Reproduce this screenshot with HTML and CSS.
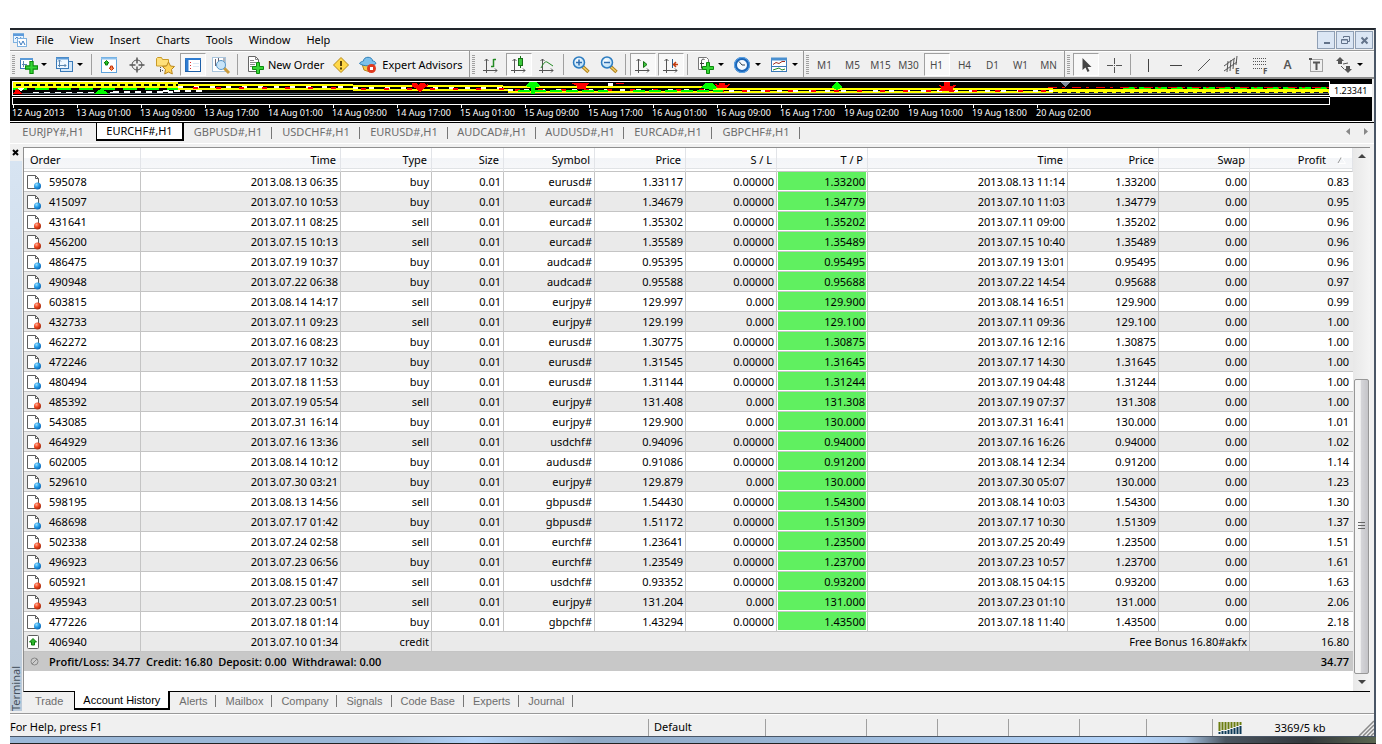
FILE: index.html
```html
<!DOCTYPE html>
<html lang="en">
<head>
<meta charset="utf-8">
<title>Terminal - Account History</title>
<link rel="stylesheet" href="styles.css">
</head>
<body>
<svg class="defs" aria-hidden="true">
  <defs>
    <radialGradient id="gb" cx=".35" cy=".3" r=".7"><stop offset="0" stop-color="#9be0ff"/><stop offset=".5" stop-color="#2a9fe8"/><stop offset="1" stop-color="#0a68b8"/></radialGradient>
    <radialGradient id="gr" cx=".35" cy=".3" r=".7"><stop offset="0" stop-color="#ffb09a"/><stop offset=".5" stop-color="#ee4a20"/><stop offset="1" stop-color="#a82808"/></radialGradient>
    <radialGradient id="lens" cx=".4" cy=".35" r=".7"><stop offset="0" stop-color="#fff"/><stop offset="1" stop-color="#a9d8f5"/></radialGradient>
    <g id="page"><path d="M.5 1.500h8l3 3v10h-11z" fill="#fff" stroke="#5d5d5d"/><path d="M8.500 1.500v3h3" fill="none" stroke="#5d5d5d"/></g>
    <symbol id="buy" viewBox="0 0 15 16"><use href="#page"/><circle cx="10.500" cy="12" r="3.500" fill="url(#gb)"/></symbol>
    <symbol id="sell" viewBox="0 0 15 16"><use href="#page"/><circle cx="10.500" cy="12" r="3.500" fill="url(#gr)"/></symbol>
    <symbol id="credit" viewBox="0 0 15 16"><rect x=".5" y="1.500" width="11" height="13" rx="1" fill="#fff" stroke="#5d5d5d"/><path d="M6 4.500l3.500 3.500h-2v3h-3v-3h-2z" fill="#2eb82e" stroke="#0a7a0a"/></symbol>
    <symbol id="plus" viewBox="0 0 12 12"><path d="M4.500 .5h3v4h4v3h-4v4h-3v-4h-4v-3h4z" fill="#35d535" stroke="#0b8a0b"/></symbol>
    <symbol id="axes" viewBox="0 0 20 20"><path d="M5.500 4v14M2 15.500h14M3.500 6l2-2 2 2M14 13.500l2 2-2 2" fill="none" stroke="#555"/></symbol>
    <symbol id="zoomer" viewBox="0 0 20 20"><path d="M11 11l6.500 6" stroke="#b08018" stroke-width="3.500"/><path d="M12 12l5 4.500" stroke="#f3cf68" stroke-width="1.500"/><circle cx="8" cy="7.500" r="5.500" fill="url(#lens)" stroke="#2d7cc0" stroke-width="1.500"/></symbol>
  </defs>
</svg>

<div class="window">
  <header class="menubar">
    <svg class="app-icon" width="16" height="16" viewBox="0 0 16 16"><rect x="1.500" y="1.500" width="10" height="9" fill="#e8f4ff" stroke="#7fb2e0"/><path d="M1 3h11" stroke="#5c9ada" stroke-width="2"/><path d="M3 7l2-2 2 3 2-3" fill="none" stroke="#4c88c8"/><rect x="5.500" y="6.500" width="9" height="8" fill="#fff" stroke="#7fb2e0"/><path d="M7 9l2 4 2-4 2 4" fill="none" stroke="#3d7cc0"/></svg>
    <nav class="menu">
      <button>File</button><button>View</button><button>Insert</button><button>Charts</button><button>Tools</button><button>Window</button><button>Help</button>
    </nav>
    <div class="winbtns">
      <button aria-label="Minimize"><svg width="15" height="15"><path d="M5 10h6" stroke="#63738a" stroke-width="2"/></svg></button>
      <button aria-label="Restore"><svg width="15" height="15"><path d="M5.500 5v-1.500h6v5h-2M3.500 6.500h6v4h-6zM3.500 7h6" fill="none" stroke="#63738a"/></svg></button>
      <button aria-label="Close"><svg width="15" height="15"><path d="M4.500 4.500l6 6M10.500 4.500l-6 6" stroke="#63738a" stroke-width="2"/></svg></button>
    </div>
  </header>

  <div class="toolbar">
    <div class="group main">
      <i class="grip"></i>
      <button class="drop" aria-label="New chart"><svg width="20" height="20"><rect x="2.500" y="3.500" width="12" height="10" fill="#fff" stroke="#3a7ab8"/><path d="M2 4h13" stroke="#5b9bd8" stroke-width="2"/><path d="M5.500 6v6M4 9.500h5" stroke="#5b87b0"/><use href="#plus" x="7" y="6" width="13" height="13"/></svg><i class="caret"></i></button>
      <button class="drop" aria-label="Profiles"><svg width="20" height="20"><rect x="6.500" y="6.500" width="12" height="10" fill="#d4e8fa" stroke="#3a7ab8"/><rect x="2.500" y="2.500" width="12" height="11" fill="#eef7ff" stroke="#3a7ab8"/><path d="M2 3.500h13" stroke="#5b9bd8" stroke-width="2"/><path d="M5.500 5v7M4 10.500h8M4 6.500l1.500-1.500 1.500 1.500M10.500 9l1.500 1.500-1.500 1.500" fill="none" stroke="#5b87b0"/></svg><i class="caret"></i></button>
      <i class="sep"></i>
      <button class="tool" aria-label="Market Watch"><svg width="20" height="20"><rect x="2.500" y="2.500" width="15" height="15" fill="#fff" stroke="#5fa3dc"/><path d="M2 3.500h16" stroke="#8cc0ec" stroke-width="2"/><path d="M7.500 5.500l2.500 2.500h-1.500v2h-2v-2h-1.500z" fill="#2bc52b" stroke="#0b7d0b"/><path d="M12.500 15.500l-2.500-2.500h1.500v-2h2v2h1.500z" fill="#ff8a50" stroke="#c63a10"/></svg></button>
      <button class="tool" aria-label="Data Window"><svg width="20" height="20"><circle cx="10" cy="10" r="5" fill="none" stroke="#555"/><path d="M10 2.500v6M10 11.500v6M2.500 10h6M11.500 10h6" stroke="#555" stroke-width="1.500"/></svg></button>
      <button class="tool" aria-label="Navigator"><svg width="20" height="20"><path d="M1.500 11V3.500l1-1h4l1 2h6v6.500z" fill="#ffe07a" stroke="#c89a28"/><path d="M5.500 12v6M5 15.500h4" stroke="#555" stroke-dasharray="1 1"/><path d="M13.500 7l2 4 4 .5-3 3 .8 4.500-3.800-2-3.800 2 .8-4.500-3-3 4-.5z" fill="#ffd45a" stroke="#b8861c"/></svg></button>
      <button class="tool on" aria-label="Terminal"><svg width="20" height="20"><rect x="2.500" y="3.500" width="15" height="13" fill="#fff" stroke="#1d5fa8"/><path d="M2 4h16" stroke="#2f7cd0" stroke-width="2"/><path d="M4 5v11" stroke="#2f7cd0" stroke-width="3"/><path d="M7.500 7v8" stroke="#d33" stroke-dasharray="1 2"/><path d="M10 8.500h6M10 11.500h6" stroke="#dce8f4"/></svg></button>
      <button class="tool" aria-label="Strategy Tester"><svg width="20" height="20"><rect x="1.500" y="2.500" width="13" height="14" fill="#fff" stroke="#a8c4dc"/><path d="M4.500 4v7M7.500 3v7M10.500 5v6M13 3v7" stroke="#667"/><path d="M13 13l5 5" stroke="#c89a3c" stroke-width="3"/><circle cx="10" cy="10" r="4.500" fill="#c8e4f8" stroke="#5a98c8"/></svg></button>
      <i class="sep"></i>
      <button class="wide"><svg width="20" height="20"><path d="M4.500 1.500h7l3 3v12h-10z" fill="#fff" stroke="#666"/><path d="M11.500 1.500v3h3M6 5.500h4M6 7.500h6M6 9.500h5M6 11.500h4" fill="none" stroke="#888"/><use href="#plus" x="8" y="7" width="12" height="12"/></svg>New Order</button>
      <button class="tool" aria-label="MetaEditor"><svg width="20" height="20"><path d="M10 2.500l7.500 7.500-7.500 7.500-7.500-7.500z" fill="#ffd84a" stroke="#b88a14" stroke-linejoin="round"/><path d="M10 6v5M10 12.500v2" stroke="#5a4208" stroke-width="2"/></svg></button>
      <button class="wide"><svg width="20" height="20"><path d="M4 9l2 6 6 2 4-8z" fill="#f5c84c" stroke="#b8861c"/><path d="M1.500 8.500c1-2 3-2 4-2.500 0-5 9-5 9 0 2 0 3 1 3.500 2.500-4 3-13 3-16.500 0z" fill="#7cc0ec" stroke="#2d7fb8"/><circle cx="13.500" cy="13.500" r="4.500" fill="#e03a20"/><rect x="12" y="12" width="3" height="3" fill="#fff"/></svg>Expert Advisors</button>
    </div>
    <div class="group">
      <i class="grip"></i>
      <button class="tool" aria-label="Bar Chart"><svg width="20" height="20"><use href="#axes" width="20" height="20"/><path d="M12.500 4v8M12.500 4.500h2.500M10 11.500h2.500" stroke="#238a23" stroke-width="1.500"/></svg></button>
      <button class="tool on" aria-label="Candlesticks"><svg width="20" height="20"><use href="#axes" width="20" height="20"/><path d="M11.500 1v12" stroke="#167016"/><rect x="9.500" y="3.500" width="4" height="7" fill="#3cc83c" stroke="#167016"/></svg></button>
      <button class="tool" aria-label="Line Chart"><svg width="20" height="20"><use href="#axes" width="20" height="20"/><path d="M4 13c2-4 4-7 6-6s4 3 6 4" fill="none" stroke="#238a23"/></svg></button>
      <i class="sep"></i>
      <button class="tool" aria-label="Zoom In"><svg width="20" height="20"><use href="#zoomer" width="20" height="20"/><path d="M5 7.500h6M8 4.500v6" stroke="#2d6cb0" stroke-width="1.500"/></svg></button>
      <button class="tool" aria-label="Zoom Out"><svg width="20" height="20"><use href="#zoomer" width="20" height="20"/><path d="M5 7.500h6" stroke="#2d6cb0" stroke-width="1.500"/></svg></button>
      <i class="sep"></i>
      <button class="tool on" aria-label="Auto Scroll"><svg width="20" height="20"><use href="#axes" width="20" height="20"/><path d="M10.500 6.500v6l3.500-3z" fill="#3cc83c" stroke="#167016"/></svg></button>
      <button class="tool on" aria-label="Chart Shift"><svg width="20" height="20"><use href="#axes" width="20" height="20"/><path d="M11.500 4v9" stroke="#2d5f8c"/><path d="M17 9.500h-4M15 7l-2.500 2.500 2.500 2.500" fill="none" stroke="#c43c10" stroke-width="1.500"/></svg></button>
      <i class="sep"></i>
      <button class="drop" aria-label="Indicators"><svg width="20" height="20"><path d="M3.500 2.500h8l2 2v10h-10z" fill="#fff" stroke="#777"/><path d="M9.500 4.500c-2-1-3 0-3 2v7M5 8.500h4" fill="none" stroke="#444"/><use href="#plus" x="7" y="7" width="12" height="12"/></svg><i class="caret"></i></button>
      <button class="drop" aria-label="Periods"><svg width="20" height="20"><circle cx="10" cy="10" r="6.500" fill="#f4faff" stroke="#1c66b8" stroke-width="3"/><circle cx="10" cy="10" r="7.500" fill="none" stroke="#5fa8ea"/><path d="M7 6.500l3 3.500h3" fill="none" stroke="#345"/></svg><i class="caret"></i></button>
      <button class="drop" aria-label="Templates"><svg width="20" height="20"><rect x="2.500" y="3.500" width="15" height="13" fill="#fff" stroke="#3a7ab8"/><path d="M2 4h16" stroke="#4a90d0" stroke-width="3"/><path d="M3 11.500h14" stroke="#3a7ab8"/><path d="M4 9.500l3-2 3 1 3-2h3" fill="none" stroke="#a03020"/><path d="M4 15l3-1 3-1 3 2 3-1" fill="none" stroke="#238a23"/></svg><i class="caret"></i></button>
    </div>
    <div class="group">
      <i class="grip"></i>
      <button class="tool tf">M1</button><button class="tool tf">M5</button><button class="tool tf">M15</button><button class="tool tf">M30</button><button class="tool tf on">H1</button><button class="tool tf">H4</button><button class="tool tf">D1</button><button class="tool tf">W1</button><button class="tool tf">MN</button>
    </div>
    <div class="group last">
      <i class="grip"></i>
      <button class="tool on" aria-label="Cursor"><svg width="20" height="20"><path d="M6.500 3v12l3-2.500 2 4.500 2-1-2-4h4z" fill="#444"/></svg></button>
      <button class="tool" aria-label="Crosshair"><svg width="20" height="20"><path d="M10.500 3v6M10.500 12v6M3 10.500h6M12 10.500h6M10 10.500h1" stroke="#555"/></svg></button>
      <i class="sep"></i>
      <button class="tool" aria-label="Vertical Line"><svg width="20" height="20"><path d="M10.500 4v13" stroke="#444"/></svg></button>
      <button class="tool" aria-label="Horizontal Line"><svg width="20" height="20"><path d="M4 10.500h12" stroke="#444"/></svg></button>
      <button class="tool" aria-label="Trendline"><svg width="20" height="20"><path d="M4 16l12-12" stroke="#555"/></svg></button>
      <button class="tool" aria-label="Equidistant Channel"><svg width="20" height="20"><path d="M2 11l11-8M2 16l13-9M6 6l-1 11M9 5l-1 11M12 4l-1 10M15 1l-1 9" stroke="#555"/><text x="13" y="19" class="glyph">E</text></svg></button>
      <button class="tool" aria-label="Fibonacci"><svg width="20" height="20"><path d="M3 3.500h14M3 6.500h14M3 9.500h14M3 13.500h9" stroke="#555" stroke-dasharray="1 1"/><text x="13" y="19" class="glyph">F</text></svg></button>
      <button class="tool bold">A</button>
      <button class="tool" aria-label="Text Label"><svg width="20" height="20"><rect x="4.500" y="4.500" width="12" height="12" fill="none" stroke="#555" stroke-dasharray="1 1"/><path d="M3 4h3M7 7.500h7M10.500 7v8" stroke="#555" stroke-width="2"/></svg></button>
      <button class="drop" aria-label="Arrows"><svg width="20" height="20"><path d="M6 2l4 4h-2v3h-4v-3h-2zM14 18l-4-4h2v-3h4v3h2z" fill="#555"/><path d="M7 11l3 3M9 9l5-1" stroke="#555"/></svg><i class="caret"></i></button>
    </div>
  </div>

  <section class="chart">
    <div class="plot">
      <div class="pane">
        <svg width="100%" height="13" shape-rendering="crispEdges">
          <path d="M20 11h80M100 10h60M150 9h40" stroke="#fff" stroke-width="2" stroke-dasharray="6 5"/>
          <path d="M0 11.500h1317" stroke="#5a6672"/>
          <path d="M0 7h165" stroke="#0f0" stroke-width="2" stroke-dasharray="14 8"/>
          <path d="M0 1h165M165 3h175M340 4h150M490 5h210M700 7h340M1040 8h277" stroke="#ff0" stroke-width="2"/>
          <path d="M0 5h165M165 7h175M340 8h155M495 10h822" stroke="#ff0" stroke-width="2"/>
          <path d="M0 3h165" stroke="#ff0" stroke-width="2" stroke-dasharray="3 5"/>
          <path d="M165 5h175M340 6h155M495 7.500h205M700 8.500h340" stroke="#fff" stroke-width="2" stroke-dasharray="5 11"/>
          <path d="M180 5.500h160M348 6.500h147M502 7.500h198M706 8.500h334" stroke="#f00" stroke-width="2" stroke-dasharray="5 18"/>
          <path d="M1040 10.500h277" stroke="#111" stroke-dasharray="5 4"/>
          <path d="M505 8.500h90M620 8.500h90M1110 6h207" stroke="#0f0" stroke-width="2" stroke-dasharray="12 4"/>
          <path d="M1035 5.500h282" stroke="#f00" stroke-dasharray="9 5 3 7"/>
          <path d="M0 12l4-6 5 6z" fill="#f00"/><path d="M5 6h6l-3 4z" fill="#fff"/>
          <path d="M81 12l3-3 4-2 4 2 4 3z" fill="#0f0"/>
          <path d="M513 4l3-4h8l3 4-5 2v6h-4v-6zM688 6l4-5h8l4 5-6 2zM818 5l6-5 6 5-6 3z" fill="#0f0"/>
          <path d="M399 1h4l2 2 2-2h4l2 2 2-2v3l-4 2-4 5-4-5-4-1zM558 1h18l-3 3v3h-9v-3zM702 2l4 1v-2h6v2l5-1-3 4h-10zM925 3l6 1v-4h6v4l6-1-4 4 4 2h-18l4-3z" fill="#f00"/>
          <path d="M595 2.500h5" stroke="#fff" stroke-width="3"/><path d="M603 1.500h8" stroke="#f00"/>
          <path d="M1047 0h10l-5 5z" fill="#7c8a9a"/>
        </svg>
      </div>
      <div class="pane lower"></div>
      <div class="dates"><span>12 Aug 2013</span><span>13 Aug 01:00</span><span>13 Aug 09:00</span><span>13 Aug 17:00</span><span>14 Aug 01:00</span><span>14 Aug 09:00</span><span>14 Aug 17:00</span><span>15 Aug 01:00</span><span>15 Aug 09:00</span><span>15 Aug 17:00</span><span>16 Aug 01:00</span><span>16 Aug 09:00</span><span>16 Aug 17:00</span><span>19 Aug 02:00</span><span>19 Aug 10:00</span><span>19 Aug 18:00</span><span>20 Aug 02:00</span></div>
    </div>
    <div class="axis"><span>1.23341</span></div>
  </section>

  <nav class="charttabs">
    <button>EURJPY#,H1</button><button class="active">EURCHF#,H1</button><button>GBPUSD#,H1</button><button>USDCHF#,H1</button><button>EURUSD#,H1</button><button>AUDCAD#,H1</button><button>AUDUSD#,H1</button><button>EURCAD#,H1</button><button>GBPCHF#,H1</button>
    <div class="pager"><button aria-label="Previous"><svg width="6" height="8"><path d="M5 0v7l-4-3.500z" fill="#888"/></svg></button><button aria-label="Next"><svg width="6" height="8"><path d="M1 0v7l4-3.500z" fill="#888"/></svg></button></div>
  </nav>

  <main class="terminal">
    <aside class="side">
      <button class="close" aria-label="Close"><svg width="7" height="7"><path d="M1 1l5 5M6 1l-5 5" stroke="#000" stroke-width="2"/></svg></button>
      <div class="strip"><span>Terminal</span></div>
    </aside>
    <div class="content">
      <div class="list">
        <table>
          <colgroup><col class="w-order"><col class="w-time"><col class="w-num"><col class="w-size"><col class="w-num"><col class="w-num"><col class="w-num"><col class="w-num"><col class="w-time"><col class="w-num"><col class="w-num"><col class="w-profit"></colgroup>
          <thead><tr><th>Order</th><th>Time</th><th>Type</th><th>Size</th><th>Symbol</th><th>Price</th><th>S / L</th><th>T / P</th><th>Time</th><th>Price</th><th>Swap</th><th>Profit<svg class="sort" width="9" height="8"><path d="M1 7l3.500-6" stroke="#999"/><path d="M4.500 1l4 6.500h-7" fill="none" stroke="#fff"/></svg></th></tr></thead>
          <tbody id="rows"></tbody>
        </table>
        <div class="scroll">
          <button aria-label="Scroll up"><svg width="8" height="5"><path d="M4 0l4 4h-8z" fill="#444"/></svg></button>
          <div class="track"><div class="thumb"><svg width="8" height="8"><path d="M0 .5h7M0 3.500h7M0 6.500h7" stroke="#666"/></svg></div></div>
          <button aria-label="Scroll down"><svg width="8" height="5"><path d="M4 4l4-4h-8z" fill="#444"/></svg></button>
        </div>
      </div>
      <nav class="tabs"><button>Trade</button><button class="active">Account History</button><button>Alerts</button><button>Mailbox</button><button>Company</button><button>Signals</button><button>Code Base</button><button>Experts</button><button>Journal</button></nav>
    </div>
  </main>

  <footer class="status">
    <span>For Help, press F1</span><span>Default</span><span></span><span></span><span></span><span></span><span></span><span></span>
    <span class="conn"><svg width="24" height="12"><path d="M1.500 0v9M4.500 0v8M7.500 0v8M10.500 0v7M13.500 0v6M16.500 0v5M19.500 0v4M22.500 0v3" stroke="#6b7d10" stroke-width="2"/><path d="M1.500 10v2M4.500 9v3M7.500 9v3M10.500 8v4M13.500 7v5M16.500 6v6M19.500 5v7M22.500 4v8" stroke="#0d3a58" stroke-width="2"/></svg><b>3369/5 kb</b><svg class="sizer" width="16" height="16"><path d="M1 16L16 1M5 16L16 5M9 16L16 9M13 16l3-3" stroke="#8a8a8a" stroke-width="1.500"/></svg></span>
  </footer>
</div>
<div class="desktop"></div>
<script src="rows.js"></script>
</body>
</html>
```
FILE: styles.css
```css
* { box-sizing: border-box; }
body {
  margin: 0;
  padding: 28px 6px 0 10px;
  background: #fff;
  color: #000;
  font: 11px/16px "Noto Sans", "Open Sans", sans-serif;
}
button { padding: 0; border: 0; background: none; color: inherit; font: inherit; white-space: nowrap; }
svg { display: block; flex: none; }
.defs { width: 0; height: 0; position: absolute; }
.window { background: #f0f0f0; border-top: 2px solid #22262c; border-right: 2px solid #4a5666; }

.menubar { display: flex; align-items: center; height: 20px; padding-left: 2px; }
.menu { display: flex; flex: 1; gap: 16px; padding-left: 8px; }
.winbtns { display: flex; gap: 1px; padding-right: 1px; }
.winbtns button { display: flex; justify-content: center; align-items: center; width: 18px; height: 18px; border: 1px solid #8f9fb4; background: #dbe6f4; }

.toolbar { display: flex; height: 29px; border-top: 1px solid #999; border-bottom: 2px solid #8c8c8c; box-shadow: inset 0 1px #fff; }
.group { display: flex; align-items: center; padding: 1px 1px 0 0; border-right: 1px solid #999; }
.group.main { padding-right: 3px; }
.group.last { flex: 1; border-right: 0; }
.grip { flex: none; width: 3px; height: 19px; margin: 0 2px; background: repeating-linear-gradient(#a0a0a0 0 1px, #f0f0f0 1px 2px); }
.sep { width: 1px; height: 21px; margin: 0 3px 0 2px; background: #a0a0a0; }
.tool { display: flex; justify-content: center; align-items: center; width: 26px; height: 23px; margin: 0 1px; border: 1px solid transparent; }
.tool.on { border-color: #a0a0a0 #fff #fff #a0a0a0; background: #f8f8f8; }
.tf { color: #4a4a4a; font-size: 10px; }
.bold { color: #555; font-size: 12px; font-weight: 600; }
.glyph { font: 700 8px "Noto Sans", sans-serif; fill: #555; }
.drop { display: flex; align-items: center; gap: 3px; width: 37px; padding-left: 4px; }
.main .drop { width: 36px; padding-left: 1px; }
.caret { border: 3px solid transparent; border-top-color: #000; border-bottom: 0; }
.wide { display: flex; align-items: center; gap: 4px; padding: 0 3px; }

.chart { display: flex; height: 43px; margin-right: 2px; background: #000; border-bottom: 1px solid #fff; color: #fff; }
.plot { flex: 1; padding: 2px 0 0 2px; overflow: hidden; }
.pane { height: 15px; border: 1px solid #fff; overflow: hidden; }
.lower { height: 8px; margin-top: 1px; }
.dates { display: flex; font-size: 9px; line-height: 12px; }
.dates span { flex: none; width: 64px; padding-top: 2px; white-space: nowrap; background: linear-gradient(#fff, #fff) 1px 0 / 1px 3px no-repeat; }
.axis { width: 42px; padding-top: 5px; }
.axis span { display: block; padding-left: 4px; background: #fff; color: #000; font-size: 9px; line-height: 13px; }

.charttabs { display: flex; height: 25px; padding-bottom: 6px; border-top: 1px solid #000; color: #6d6d6d; box-shadow: inset 0 -3px #f0f0f0, inset 0 -4px #fff; }
.charttabs > button { width: 88px; }
.charttabs > button:first-child { width: 86px; }
.charttabs > .active { background: #fff; color: #000; border: solid #000; border-width: 0 2px 2px 1px; }
.charttabs > button:nth-child(n+3) { background: linear-gradient(#777, #777) right 4px / 1px 12px no-repeat; }
.pager { display: flex; gap: 12px; margin-left: auto; padding-right: 5px; }

.terminal { display: flex; height: 566px; }
.side { display: flex; flex-direction: column; width: 13px; padding-bottom: 2px; }
.close { display: flex; justify-content: center; width: 10px; height: 14px; padding-top: 2px; }
.strip { display: flex; flex: 1; align-items: end; width: 12px; background: linear-gradient(#d7e4f2, #bccad9); color: #44505e; }
.strip span { writing-mode: vertical-rl; transform: rotate(180deg); line-height: 12px; }
.content { flex: 1; min-width: 0; padding-right: 4px; }
.list { display: flex; height: 545px; border: solid #8f8f8f; border-width: 1px 0 0 1px; border-bottom: 1px solid #000; background: #fff; }
table { flex: 1; width: 100%; align-self: flex-start; table-layout: fixed; border-collapse: separate; border-spacing: 0; }
.w-order { width: 117px; } .w-time { width: 200px; } .w-num { width: 91px; } .w-size { width: 72px; } .w-profit { width: 103px; }
th { position: relative; height: 24px; padding: 0 4px; border-right: 1px solid #e2e4e8; border-bottom: 1px solid #c4c4c4; background: linear-gradient(#fff 45%, #f3f5f8 45%, #f6f7f9 85%, #d4d8dc 88%, #fff 92%); font-weight: 400; text-align: right; }
th:first-child { padding-left: 6px; text-align: left; }
th:last-child { padding-right: 26px; }
.sort { position: absolute; right: 6px; top: 8px; }
td { height: 20px; padding: 0 2px 0 3px; border-right: 1px solid #c4c4c4; border-bottom: 1px solid #c4c4c4; text-align: right; white-space: nowrap; }
td:last-child { padding-right: 4px; border-right: 0; }
tr:nth-child(even) td { background-color: #eaeaea; }
tbody tr td.tp { background: #60f060; box-shadow: inset 0 -1px #fff, inset -1px 0 #fff, inset 1px 0 #fff; }
.order { display: flex; align-items: center; gap: 7px; }
tbody tr.sum td { height: 19px; background: #c8c8c8; border: 0; font-family: "Open Sans", sans-serif; font-weight: 600; }
.sum .order { gap: 10px; padding-left: 3px; }
.scroll { display: flex; flex-direction: column; width: 17px; background: linear-gradient(90deg, #e8e8e8, #f4f4f4); }
.scroll button { display: flex; justify-content: center; align-items: center; height: 17px; }
.track { display: flex; flex-direction: column; justify-content: flex-end; flex: 1; }
.thumb { display: flex; justify-content: center; align-items: center; height: 58%; margin: 0 1px; border: 1px solid #979797; border-radius: 2px; background: linear-gradient(90deg, #f4f4f4 40%, #d4d4d8 50%, #c4c4c8); }
.tabs { display: flex; height: 18px; color: #6d6d6d; font-family: "Liberation Sans", Arial, sans-serif; }
.tabs button { padding: 0 9px; background: linear-gradient(#777, #777) right 3px / 1px 12px no-repeat; }
.tabs button:first-child { padding: 0 11px 0 12px; background: none; }
.tabs .active { margin-top: -1px; padding: 0 8px; background: #fff; border: solid #000; border-width: 0 2px 2px 1px; color: #000; }

.status { display: grid; grid-template-columns: 638fr 117fr 101fr 71fr 71fr 71fr 67fr 66fr 162fr; height: 24px; padding-top: 5px; border-top: 1px solid #999; border-bottom: 1px solid #4a5666; box-shadow: inset 0 1px #fff; }
.status > span { height: 17px; white-space: nowrap; }
.status > span + span { padding-left: 5px; border-left: 1px solid #a0a0a0; }
.conn { display: flex; align-items: center; }
.conn b { flex: 1; font-weight: 400; text-align: center; }
.conn .sizer { align-self: flex-end; }
.desktop { height: 7px; border-bottom: 1px solid #222; background: linear-gradient(90deg, #9bb8d8 0%, #9bb8d8 28%, #b4d4fa 34%, #8fa9c6 42%, #9bb8d8 60%, #b4d4fa 82%, #a8c4e4 86%, #4a5560 89%, #33383c 95%, #5a6650 100%); }
```
FILE: rows.js
```js
const trades = `595078|2013.08.13 06:35|buy|eurusd#|1.33117|0.00000|1.33200|2013.08.13 11:14|0.83
415097|2013.07.10 10:53|buy|eurcad#|1.34679|0.00000|1.34779|2013.07.10 11:03|0.95
431641|2013.07.11 08:25|sell|eurcad#|1.35302|0.00000|1.35202|2013.07.11 09:00|0.96
456200|2013.07.15 10:13|sell|eurcad#|1.35589|0.00000|1.35489|2013.07.15 10:40|0.96
486475|2013.07.19 10:37|buy|audcad#|0.95395|0.00000|0.95495|2013.07.19 13:01|0.96
490948|2013.07.22 06:38|buy|audcad#|0.95588|0.00000|0.95688|2013.07.22 14:54|0.97
603815|2013.08.14 14:17|sell|eurjpy#|129.997|0.000|129.900|2013.08.14 16:51|0.99
432733|2013.07.11 09:23|sell|eurjpy#|129.199|0.000|129.100|2013.07.11 09:36|1.00
462272|2013.07.16 08:23|buy|eurusd#|1.30775|0.00000|1.30875|2013.07.16 12:16|1.00
472246|2013.07.17 10:32|buy|eurusd#|1.31545|0.00000|1.31645|2013.07.17 14:30|1.00
480494|2013.07.18 11:53|buy|eurusd#|1.31144|0.00000|1.31244|2013.07.19 04:48|1.00
485392|2013.07.19 05:54|sell|eurjpy#|131.408|0.000|131.308|2013.07.19 07:37|1.00
543085|2013.07.31 16:14|buy|eurjpy#|129.900|0.000|130.000|2013.07.31 16:41|1.01
464929|2013.07.16 13:36|sell|usdchf#|0.94096|0.00000|0.94000|2013.07.16 16:26|1.02
602005|2013.08.14 10:12|buy|audusd#|0.91086|0.00000|0.91200|2013.08.14 12:34|1.14
529610|2013.07.30 03:21|buy|eurjpy#|129.879|0.000|130.000|2013.07.30 05:07|1.23
598195|2013.08.13 14:56|sell|gbpusd#|1.54430|0.00000|1.54300|2013.08.14 10:03|1.30
468698|2013.07.17 01:42|buy|gbpusd#|1.51172|0.00000|1.51309|2013.07.17 10:30|1.37
502338|2013.07.24 02:58|sell|eurchf#|1.23641|0.00000|1.23500|2013.07.25 20:49|1.51
496923|2013.07.23 06:56|buy|eurchf#|1.23549|0.00000|1.23700|2013.07.23 10:57|1.61
605921|2013.08.15 01:47|sell|usdchf#|0.93352|0.00000|0.93200|2013.08.15 04:15|1.63
495943|2013.07.23 00:51|sell|eurjpy#|131.204|0.000|131.000|2013.07.23 01:10|2.06
477226|2013.07.18 01:14|buy|gbpchf#|1.43294|0.00000|1.43500|2013.07.18 11:40|2.18`.split("\n").map(line => line.split("|"));

const orderCell = (icon, id) =>
  `<td><div class="order"><svg width="15" height="16"><use href="#${icon}"/></svg>${id}</div></td>`;

const html = trades.map(([id, open, type, symbol, price, sl, tp, close, profit]) =>
  `<tr>${orderCell(type, id)}<td>${open}</td><td>${type}</td><td>0.01</td><td>${symbol}</td><td>${price}</td><td>${sl}</td><td class="tp">${tp}</td><td>${close}</td><td>${tp}</td><td>0.00</td><td>${profit}</td></tr>`);

html.push(`<tr>${orderCell("credit", "406940")}<td>2013.07.10 01:34</td><td>credit</td><td colspan="8">Free Bonus 16.80#akfx</td><td>16.80</td></tr>`);
html.push(`<tr class="sum"><td colspan="11"><div class="order"><svg width="9" height="9"><circle cx="4.500" cy="4.500" r="3.500" fill="#ccc" stroke="#888"/><path d="M2 7l5-5" stroke="#888"/></svg><span>Profit/Loss: 34.77&nbsp; Credit: 16.80&nbsp; Deposit: 0.00&nbsp; Withdrawal: 0.00</span></div></td><td>34.77</td></tr>`);

document.getElementById("rows").innerHTML = html.join("");
```
